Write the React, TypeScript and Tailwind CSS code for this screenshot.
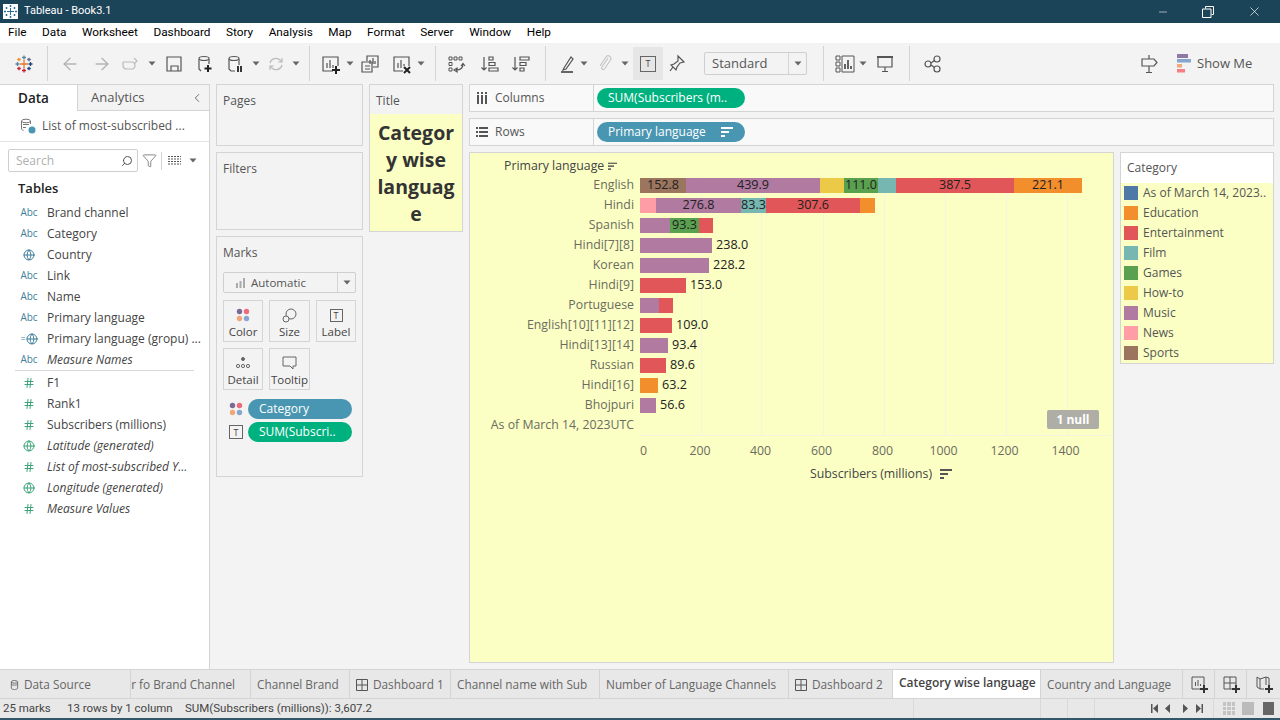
import { ArrowLeft, ArrowRight, Globe, Hash, Search, X, Minus, ChevronLeft, Filter } from "lucide-react";

const C = {
  asof: "#4e79a7",
  edu: "#f28e2b",
  ent: "#e15759",
  film: "#76b7b2",
  games: "#59a14f",
  how: "#edc948",
  music: "#b07aa1",
  news: "#ff9da7",
  sports: "#9c755f",
};

type Seg = { w: number; c: string; t?: string };

const rows: { name: string; segs: Seg[]; after?: string }[] = [
  {
    name: "English",
    segs: [
      { w: 46, c: C.sports, t: "152.8" },
      { w: 134, c: C.music, t: "439.9" },
      { w: 24, c: C.how },
      { w: 34, c: C.games, t: "111.0" },
      { w: 18, c: C.film },
      { w: 118, c: C.ent, t: "387.5" },
      { w: 68, c: C.edu, t: "221.1" },
    ],
  },
  {
    name: "Hindi",
    segs: [
      { w: 16, c: C.news },
      { w: 85, c: C.music, t: "276.8" },
      { w: 25, c: C.film, t: "83.3" },
      { w: 94, c: C.ent, t: "307.6" },
      { w: 15, c: C.edu },
    ],
  },
  {
    name: "Spanish",
    segs: [
      { w: 30, c: C.music },
      { w: 29, c: C.games, t: "93.3" },
      { w: 14, c: C.ent },
    ],
  },
  { name: "Hindi[7][8]", segs: [{ w: 72, c: C.music }], after: "238.0" },
  { name: "Korean", segs: [{ w: 69, c: C.music }], after: "228.2" },
  { name: "Hindi[9]", segs: [{ w: 46, c: C.ent }], after: "153.0" },
  { name: "Portuguese", segs: [{ w: 19, c: C.music }, { w: 14, c: C.ent }] },
  { name: "English[10][11][12]", segs: [{ w: 32, c: C.ent }], after: "109.0" },
  { name: "Hindi[13][14]", segs: [{ w: 28, c: C.music }], after: "93.4" },
  { name: "Russian", segs: [{ w: 26, c: C.ent }], after: "89.6" },
  { name: "Hindi[16]", segs: [{ w: 18, c: C.edu }], after: "63.2" },
  { name: "Bhojpuri", segs: [{ w: 16, c: C.music }], after: "56.6" },
  { name: "As of March 14, 2023UTC", segs: [] },
];

const legend = [
  ["As of March 14, 2023..", C.asof],
  ["Education", C.edu],
  ["Entertainment", C.ent],
  ["Film", C.film],
  ["Games", C.games],
  ["How-to", C.how],
  ["Music", C.music],
  ["News", C.news],
  ["Sports", C.sports],
];

const gridLines = [60.5, 121, 182.5, 243.5, 304.5, 366, 426.5];
const ticks = ["200", "400", "600", "800", "1000", "1200", "1400"];

function Caret({ className = "" }: { className?: string }) {
  return (
    <svg width="8" height="5" viewBox="0 0 8 5" className={className}>
      <path d="M0.5 0.5h7L4 4.5z" fill="#666" />
    </svg>
  );
}

function Sep({ className = "" }: { className?: string }) {
  return <div className={`h-[35px] w-px bg-[#d4d4d4] ${className}`} />;
}

function Ico({ children, className = "" }: { children: React.ReactNode; className?: string }) {
  return (
    <svg
      width="20"
      height="20"
      viewBox="0 0 20 20"
      fill="none"
      stroke="#555"
      strokeWidth="1.2"
      className={`shrink-0 ${className}`}
    >
      {children}
    </svg>
  );
}

function SortGlyph({ color = "#fff" }: { color?: string }) {
  return (
    <svg width="12" height="11" viewBox="0 0 12 11" fill={color}>
      <rect x="0" y="0" width="12" height="2" />
      <rect x="0" y="4" width="8" height="2" />
      <rect x="0" y="8" width="4" height="2" />
    </svg>
  );
}

function Dots({ size = 14 }: { size?: number }) {
  return (
    <svg width={size} height={size} viewBox="0 0 14 14">
      <circle cx="3.5" cy="3.5" r="2.7" fill="#7b6a94" />
      <circle cx="10.5" cy="3.5" r="2.7" fill="#ee6b7b" />
      <circle cx="3.5" cy="10.5" r="2.7" fill="#f0a878" />
      <circle cx="10.5" cy="10.5" r="2.7" fill="#86a6cf" />
    </svg>
  );
}

function TBox({ size = 13 }: { size?: number }) {
  return (
    <span
      className="flex items-center justify-center border border-[#666] text-[9px] leading-none text-[#444]"
      style={{ width: size, height: size }}
    >
      T
    </span>
  );
}

function TableauLogo() {
  const p = (x: number, y: number, r: number, c: string) => (
    <path d={`M${x - r} ${y}H${x + r}M${x} ${y - r}V${y + r}`} stroke={c} strokeWidth="1.3" />
  );
  return (
    <svg width="18" height="18" viewBox="0 0 18 18" fill="none">
      {p(9, 9, 4, "#e8762d")}
      {p(9, 2.5, 2, "#5b879b")}
      {p(9, 15.5, 2, "#c72035")}
      {p(2.5, 9, 2, "#59879b")}
      {p(15.5, 9, 2, "#1f447e")}
      {p(4, 4.5, 1.8, "#f28e2b")}
      {p(14, 4.5, 1.8, "#5b6591")}
      {p(4, 13.5, 1.8, "#c72035")}
      {p(14, 13.5, 1.8, "#1f447e")}
    </svg>
  );
}

function Toolbar() {
  return (
    <div className="flex h-[41px] shrink-0 items-center bg-[#f3f3f3] text-[#555]">
      <div className="flex w-[47px] justify-center">
        <TableauLogo />
      </div>
      <Sep />
      <ArrowLeft size={20} strokeWidth={1.6} className="ml-[12px] text-[#b5b5b5]" />
      <ArrowRight size={20} strokeWidth={1.6} className="ml-[12px] text-[#b5b5b5]" />
      <Ico className="ml-[9px]">
        <path d="M2 8h10a4 4 0 0 1 0 7H5a3.500 3.500 0 0 1-3-3.500V8" stroke="#bbb" />
        <path d="M13 4l3 3-3 3" stroke="#bbb" />
      </Ico>
      <Caret className="ml-[7px]" />
      <Ico className="ml-[8px]">
        <path d="M3 3h14v14H3z" />
        <path d="M7 17v-5h7v5" />
      </Ico>
      <Ico className="ml-[11px]">
        <ellipse cx="9" cy="4.500" rx="5" ry="2" />
        <path d="M4 5v10l2 2M14 5v5" />
        <path d="M13 11v7M9.500 14.500h7" stroke="#222" strokeWidth="2" />
      </Ico>
      <Ico className="ml-[11px]">
        <ellipse cx="8" cy="4.500" rx="5" ry="2" />
        <path d="M3 5v10l2 2h4M13 5v6" />
        <path d="M12 12v6M15 12v6" stroke="#222" strokeWidth="1.8" />
      </Ico>
      <Caret className="ml-[6px]" />
      <Ico className="ml-[6px]">
        <path d="M4 9a6 6 0 0 1 10-3l2 2M16 11a6 6 0 0 1-10 3l-2-2" stroke="#bbb" />
        <path d="M16 4v4h-4M4 16v-4h4" stroke="#bbb" />
      </Ico>
      <Caret className="ml-[6px]" />
      <Sep className="ml-[9px]" />
      <Ico className="ml-[11px]">
        <path d="M12 17H2V3h15v9" />
        <path d="M6 14V9M9 14V6M12 14v-3" />
        <path d="M15 12v8M11 16h8" stroke="#222" strokeWidth="2" />
      </Ico>
      <Caret className="ml-[5px]" />
      <Ico className="ml-[6px]">
        <path d="M7 7V2h11v11h-5" />
        <path d="M2 8h10v10H2z" />
        <path d="M10 10V6M13 10V4M15 10V7M5 15h5M5 12h5" />
      </Ico>
      <Ico className="ml-[12px]">
        <path d="M11 17H2V3h15v9" />
        <path d="M6 14V9M9 14V6M12 12v-2" />
        <path d="M12 13l6 6M18 13l-6 6" stroke="#222" strokeWidth="2" />
      </Ico>
      <Caret className="ml-[5px]" />
      <Sep className="ml-[10px]" />
      <Ico className="ml-[10px]">
        <path d="M3 3h3v3H3zM8 3h3v3H8zM13 3h3v3h-3zM3 8.500h3v3H3zM3 14h3v3H3z" strokeWidth="1" />
        <path d="M10 16c4 0 7-2 7-6M15 12l2-2.500 2 2.500M8 16l3-2v4z" />
      </Ico>
      <Ico className="ml-[13px]">
        <path d="M5 3v13M2.500 13.500L5 16l2.500-2.500" />
        <path d="M10 3h4v3h-4zM10 8.500h6v3h-6zM10 14h9v3h-9z" />
      </Ico>
      <Ico className="ml-[11px]">
        <path d="M5 3v13M2.500 13.500L5 16l2.500-2.500" />
        <path d="M10 3h9v3h-9zM10 8.500h6v3h-6zM10 14h4v3h-4z" />
      </Ico>
      <Sep className="ml-[15px]" />
      <Ico className="ml-[11px]">
        <path d="M7 14L14 3l2 2-7 10-3 1z" />
        <path d="M4 18h12" strokeWidth="1.800" />
      </Ico>
      <Caret className="ml-[3px]" />
      <Ico className="ml-[7px]">
        <path d="M13 4l-6 9a1.500 1.500 0 0 0 2.500 2l6-9a2.700 2.700 0 0 0-4.500-3l-6 9" stroke="#c4c4c4" />
      </Ico>
      <Caret className="ml-[6px]" />
      <div className="ml-[4px] flex h-[33px] w-[30px] items-center justify-center bg-[#e6e6e6]">
        <TBox size={16} />
      </div>
      <Ico className="ml-[4px]">
        <path d="M11 2l6 6-4 1-3 4-1 3-5-5 3-1 4-3zM6 13l-3 4" />
      </Ico>
      <div className="ml-[17px] flex h-[23px] w-[103px] items-center rounded-[2px] border border-[#cfcfcf] text-[13px]">
        <span className="flex-1 pl-[7px]">Standard</span>
        <span className="flex h-full w-[18px] items-center justify-center border-l border-[#d4d4d4]">
          <Caret />
        </span>
      </div>
      <Sep className="ml-[16px]" />
      <Ico className="ml-[11px]">
        <path d="M1 2h4v4H1zM1 8h4v4H1zM1 14h4v4H1zM7 2h12v16H7z" strokeWidth="1" />
        <path d="M10 15v-5M13 15V6M16 15v-3" strokeWidth="1.800" />
      </Ico>
      <Caret className="ml-[4px]" />
      <Ico className="ml-[8px]">
        <path d="M2 3h16" strokeWidth="2" />
        <path d="M3 4v9h14V4M10 13v4M7 17.500h6" />
      </Ico>
      <Sep className="ml-[14px]" />
      <Ico className="ml-[13px]">
        <circle cx="5" cy="10" r="3" />
        <circle cx="14" cy="5" r="3" />
        <circle cx="14" cy="15" r="3" />
        <path d="M8 9l3.500-2.500M8 11l3.500 2.500" />
      </Ico>
      <Ico className="ml-[196px]">
        <path d="M10 1v4M3 5h12l3 3.500-3 3.500H3zM10 12v6M7 18.500h6" />
      </Ico>
      <div className="ml-[18px] flex items-center gap-[6px] text-[13px]">
        <svg width="14" height="19" viewBox="0 0 14 19">
          <rect x="0" y="0" width="11" height="4" fill="#8d79a3" />
          <rect x="0" y="5" width="14" height="3.500" fill="#86a6cf" />
          <rect x="0" y="10" width="5" height="3.500" fill="#f0a878" />
          <rect x="0" y="15" width="8" height="3.500" fill="#f47f85" />
        </svg>
        Show Me
      </div>
    </div>
  );
}

function Field({ name, kind, italic }: { name: string; kind: "abc" | "geo" | "hash" | "geom" | "lang"; italic?: boolean }) {
  return (
    <div className="flex h-[21px] shrink-0 items-center">
      <span className="flex w-[47px] shrink-0 items-center justify-center pr-[5px] pl-[16px] whitespace-nowrap">
        {kind === "abc" && <span className="text-[10px] font-medium text-[#3f7f9a]">Abc</span>}
        {kind === "geo" && <Globe size={12} className="text-[#3f7f9a]" />}
        {kind === "lang" && (
          <span className="flex items-center text-[9px] leading-none text-[#3f7f9a]">
            =<Globe size={12} />
          </span>
        )}
        {kind === "geom" && <Globe size={12} className="text-[#3ca37a]" />}
        {kind === "hash" && <Hash size={12} className="text-[#3ca37a]" />}
      </span>
      <span className={`truncate text-[#444] ${italic ? "italic" : ""}`}>{name}</span>
    </div>
  );
}

function DataPane() {
  return (
    <div className="flex w-[210px] shrink-0 flex-col border-t border-r border-[#d4d4d4] bg-white">
      <div className="flex h-[26px] shrink-0 text-[13px]">
        <div className="flex w-[77px] items-center pl-[18px] text-[13.500px] font-semibold text-[#222]">Data</div>
        <div className="flex flex-1 items-center justify-between border-b border-l border-[#d4d4d4] bg-[#f3f3f3] pr-[5px] pl-[13px] text-[#555]">
          Analytics
          <ChevronLeft size={14} strokeWidth={1.4} />
        </div>
      </div>
      <div className="flex h-[31px] shrink-0 items-center border-b border-[#e4e4e4] pl-[20px] text-[#555]">
        <svg width="16" height="16" viewBox="0 0 16 16" fill="none" stroke="#777" className="mr-[6px]">
          <ellipse cx="6" cy="3" rx="4.500" ry="1.800" />
          <path d="M1.500 3v8l2 2M10.500 3v3M3 6.500h6M3 9.500h3" />
          <circle cx="12" cy="12" r="3.500" fill="#4996b2" stroke="none" />
        </svg>
        List of most-subscribed ...
      </div>
      <div className="flex h-[30px] shrink-0 items-end pl-[8px]">
        <div className="flex h-[23px] w-[130px] items-center justify-between rounded-[2px] border border-[#cfcfcf] pr-[4px] pl-[7px] text-[#b0b0b0]">
          Search
          <Search size={12} className="-scale-x-100 text-[#555]" />
        </div>
        <Filter size={15} strokeWidth={1.1} className="mb-[4px] ml-[4px] text-[#555]" />
        <div className="mb-[2px] ml-[4px] h-[18px] w-px bg-[#d4d4d4]" />
        <svg width="13" height="11" viewBox="0 0 13 11" className="mb-[6px] ml-[6px]" stroke="#555" strokeDasharray="2 1">
          <path d="M0 1.500h13M0 4h13M0 6.500h13M0 9h13" />
        </svg>
        <Caret className="mb-[9px] ml-[8px]" />
      </div>
      <div className="flex h-[30px] shrink-0 items-center pt-[3px] pl-[18px] text-[13px] font-semibold text-[#222]">Tables</div>
      <Field name="Brand channel" kind="abc" />
      <Field name="Category" kind="abc" />
      <Field name="Country" kind="geo" />
      <Field name="Link" kind="abc" />
      <Field name="Name" kind="abc" />
      <Field name="Primary language" kind="abc" />
      <Field name="Primary language (gropu) ..." kind="lang" />
      <Field name="Measure Names" kind="abc" italic />
      <div className="mx-[15px] mb-px h-px shrink-0 bg-[#d9d9d9]" />
      <Field name="F1" kind="hash" />
      <Field name="Rank1" kind="hash" />
      <Field name="Subscribers (millions)" kind="hash" />
      <Field name="Latitude (generated)" kind="geom" italic />
      <Field name="List of most-subscribed Y..." kind="hash" italic />
      <Field name="Longitude (generated)" kind="geom" italic />
      <Field name="Measure Values" kind="hash" italic />
    </div>
  );
}

function MarkBtn({ label, icon, className = "" }: { label: string; icon: React.ReactNode; className?: string }) {
  return (
    <div className={`flex h-[42px] w-[40px] flex-col items-center border border-[#d4d4d4] pt-[4px] text-[11.500px] text-[#444] ${className}`}>
      <div className="flex h-[20px] items-center">{icon}</div>
      <span className="leading-[14px] whitespace-nowrap">{label}</span>
    </div>
  );
}

function MarksColumn() {
  return (
    <div className="ml-[6px] flex w-[147px] shrink-0 flex-col gap-[6px] text-[#555]">
      <div className="h-[62px] border border-[#d4d4d4] pt-[7px] pl-[6px]">Pages</div>
      <div className="h-[78px] border border-[#d4d4d4] pt-[7px] pl-[6px]">Filters</div>
      <div className="h-[241px] border border-[#d4d4d4] pt-[7px] pl-[6px]">
        <div>Marks</div>
        <div className="mt-[10px] flex h-[21px] w-[133px] items-center rounded-[2px] border border-[#cfcfcf] text-[11.500px]">
          <span className="flex flex-1 items-center gap-[5px] pl-[12px]">
            <svg width="10" height="10" viewBox="0 0 10 10" fill="#aaa">
              <rect x="0" y="5" width="2" height="5" />
              <rect x="3.500" y="3" width="2" height="7" />
              <rect x="7" y="0" width="2" height="10" />
            </svg>
            Automatic
          </span>
          <span className="flex h-full w-[18px] items-center justify-center border-l border-[#d4d4d4]">
            <Caret />
          </span>
        </div>
        <div className="mt-[7px] flex gap-[6px]">
          <MarkBtn label="Color" icon={<Dots />} />
          <MarkBtn
            label="Size"
            className="w-[41px]"
            icon={
              <svg width="15" height="15" viewBox="0 0 15 15" fill="none" stroke="#666">
                <circle cx="9" cy="6" r="5" />
                <circle cx="4" cy="11" r="3" fill="#f3f3f3" />
              </svg>
            }
          />
          <MarkBtn label="Label" icon={<TBox />} />
        </div>
        <div className="mt-[6px] flex gap-[6px]">
          <MarkBtn
            label="Detail"
            icon={
              <svg width="14" height="12" viewBox="0 0 14 12" fill="none" stroke="#666">
                <circle cx="7" cy="2" r="1.500" fill="#666" />
                <circle cx="2" cy="9" r="1.600" />
                <circle cx="7" cy="9" r="1.600" />
                <circle cx="12" cy="9" r="1.600" />
              </svg>
            }
          />
          <MarkBtn
            label="Tooltip"
            className="w-[41px]"
            icon={
              <svg width="15" height="14" viewBox="0 0 15 14" fill="none" stroke="#666">
                <path d="M1 1h13v9h-3v3l-3-3H1z" />
              </svg>
            }
          />
        </div>
        <div className="mt-[9px] flex items-center gap-[5px] pl-[6px]">
          <Dots />
          <div className="flex h-[20px] w-[104px] items-center rounded-full bg-[#4996b2] pl-[11px] text-white">Category</div>
        </div>
        <div className="mt-[3px] flex items-center gap-[5px] pl-[6px]">
          <TBox size={14} />
          <div className="flex h-[20px] w-[104px] items-center rounded-full bg-[#00b180] pl-[11px] text-white">SUM(Subscri..</div>
        </div>
      </div>
    </div>
  );
}

function TitleColumn() {
  return (
    <div className="ml-[6px] h-[148px] w-[94px] shrink-0 border border-[#d4d4d4] text-[#555]">
      <div className="flex h-[29px] items-center pt-[2px] pl-[6px]">Title</div>
      <div className="h-[117px] bg-[#fbffc4] pt-[5px] text-center text-[19.500px] leading-[27px] font-bold text-[#333]">
        Categor
        <br />
        y wise
        <br />
        languag
        <br />e
      </div>
    </div>
  );
}

function Shelf({ label, icon, children, className = "" }: { label: string; icon: React.ReactNode; children: React.ReactNode; className?: string }) {
  return (
    <div className={`flex h-[28px] items-center border border-[#d4d4d4] bg-[#f9f9f9] ${className}`}>
      <div className="flex h-full w-[124px] items-center gap-[7px] border-r border-[#d4d4d4] pl-[6px] text-[#555]">
        {icon}
        {label}
      </div>
      {children}
    </div>
  );
}

function Chart() {
  return (
    <div className="relative flex h-[511px] w-[645px] shrink-0 flex-col border border-[#d4d4d4] bg-[#fbffc4] text-[12.300px] text-[#6b6b5f]">
      <div className="flex h-[22px] items-center gap-[4px] pt-[5px] pl-[34px] font-medium text-[#444]">
        Primary language
        <span className="flex origin-left scale-75">
          <SortGlyph color="#555" />
        </span>
      </div>
      {/* plot */}
      <div className="relative">
        <div className="absolute top-0 bottom-0 left-[170px] w-[440px]">
          {gridLines.map((x) => (
            <div key={x} className="absolute top-0 bottom-0 w-px bg-[#f3f5dc]" style={{ left: x }} />
          ))}
        </div>
        {rows.map((r) => (
          <div key={r.name} className="relative flex h-[20px] items-center">
            <div className="w-[164px] shrink-0 text-right whitespace-nowrap">{r.name}</div>
            <div className="ml-[6px] flex h-[15px] items-center text-[12.600px] text-[#222]">
              {r.segs.map((s, i) => (
                <div
                  key={i}
                  className="flex h-full items-center justify-center"
                  style={{ width: s.w, backgroundColor: s.c }}
                >
                  {s.t}
                </div>
              ))}
              {r.after && <span className="ml-[4px]">{r.after}</span>}
            </div>
          </div>
        ))}
        <div className="absolute top-[235px] right-[14px] flex h-[19px] w-[52px] items-center justify-center rounded-[2px] bg-[#aeaea6] text-[12px] font-bold text-white">
          1 null
        </div>
      </div>
      <div className="ml-[170px] flex h-[25px] w-[472px] items-end border-t border-[#f3f5dc]">
        <span className="ml-[-1px] w-[9px] shrink-0 pl-[1px]">0</span>
        {ticks.map((t, i) => (
          <span key={t} className={`shrink-0 text-center ${i === 0 ? "ml-[22px] w-[60px]" : "w-[61px]"}`}>
            {t}
          </span>
        ))}
      </div>
      <div className="mt-[5px] flex items-center pl-[340px] font-medium text-[#444]">
        Subscribers (millions)
        <span className="ml-[8px] flex">
          <SortGlyph color="#555" />
        </span>
      </div>
    </div>
  );
}

function Legend() {
  return (
    <div className="ml-[6px] h-[212px] w-[154px] shrink-0 border border-[#d4d4d4] text-[#555]">
      <div className="flex h-[30px] items-center bg-white pb-[1px] pl-[6px] text-[#555]">Category</div>
      <div className="h-[180px] bg-[#fbffc4]">
        {legend.map(([label, color]) => (
          <div key={label} className="flex h-[20px] items-center pl-[3px]">
            <span className="h-[14px] w-[14px] shrink-0" style={{ backgroundColor: color }} />
            <span className="ml-[5px] whitespace-nowrap">{label}</span>
          </div>
        ))}
      </div>
    </div>
  );
}

function Workspace() {
  return (
    <div className="mx-[6px] flex min-w-0 flex-1 flex-col">
      <Shelf
        label="Columns"
        icon={
          <svg width="12" height="12" viewBox="0 0 12 12" fill="#555">
            <rect x="1" y="3" width="2" height="9" />
            <rect x="5" y="3" width="2" height="9" />
            <rect x="9" y="3" width="2" height="9" />
            <rect x="1" y="0" width="2" height="2" />
            <rect x="5" y="0" width="2" height="2" />
            <rect x="9" y="0" width="2" height="2" />
          </svg>
        }
      >
        <div className="ml-[3px] flex h-[20px] w-[148px] items-center rounded-full bg-[#00b180] pl-[11px] text-white">SUM(Subscribers (m..</div>
      </Shelf>
      <Shelf
        label="Rows"
        className="mt-[6px]"
        icon={
          <svg width="12" height="12" viewBox="0 0 12 12" fill="#555">
            <rect x="3" y="1" width="9" height="2" />
            <rect x="3" y="5" width="9" height="2" />
            <rect x="3" y="9" width="9" height="2" />
            <rect x="0" y="1" width="2" height="2" />
            <rect x="0" y="5" width="2" height="2" />
            <rect x="0" y="9" width="2" height="2" />
          </svg>
        }
      >
        <div className="ml-[3px] flex h-[20px] w-[148px] items-center justify-between rounded-full bg-[#4996b2] pr-[12px] pl-[11px] text-white">
          Primary language
          <SortGlyph />
        </div>
      </Shelf>
      <div className="mt-[6px] flex">
        <Chart />
        <Legend />
      </div>
    </div>
  );
}

function Tab({ w, children, active, cut }: { w: number; children: React.ReactNode; active?: boolean; cut?: boolean }) {
  return (
    <div
      className={`flex h-full shrink-0 items-center border-r border-[#d4d4d4] whitespace-nowrap ${cut ? "justify-end pr-[15px]" : "pl-[6px]"} ${active ? "bg-white pb-[2px] text-[12px] font-semibold text-[#444]" : "pt-[2px] text-[#666]"}`}
      style={{ width: w }}
    >
      {children}
    </div>
  );
}

function DashGlyph() {
  return (
    <svg width="12" height="12" viewBox="0 0 12 12" fill="none" stroke="#555" className="mr-[5px] shrink-0">
      <path d="M.5.5h11v11H.5zM6 .5v11M.5 6h11" />
    </svg>
  );
}

function TabBar() {
  return (
    <div className="flex h-[30px] shrink-0 border-y border-[#d4d4d4] bg-[#e8e8e8] text-[11.800px]">
      <Tab w={131}>
        <svg width="9" height="12" viewBox="0 0 10 12" fill="none" stroke="#666" className="mr-[5px] ml-[4px]">
          <ellipse cx="5" cy="2.500" rx="3.500" ry="1.500" />
          <path d="M1.500 2.500v7c0 2 7 2 7 0v-7M1.500 5c0 1.500 7 1.500 7 0" />
        </svg>
        <span>Data Source</span>
      </Tab>
      <Tab w={120} cut>
        r fo Brand Channel
      </Tab>
      <Tab w={99}>Channel Brand</Tab>
      <Tab w={101}>
        <DashGlyph />
        Dashboard 1
      </Tab>
      <Tab w={149}>Channel name with Sub</Tab>
      <Tab w={189}>Number of Language Channels</Tab>
      <Tab w={104}>
        <DashGlyph />
        Dashboard 2
      </Tab>
      <Tab w={148} active>
        Category wise language
      </Tab>
      <Tab w={142}>Country and Language</Tab>
      <div className="flex w-[32px] shrink-0 items-center justify-center border-r border-[#d4d4d4]">
        <svg width="20" height="20" viewBox="0 0 20 20" fill="none" stroke="#555">
          <path d="M11 15H3V3h12v8M6.500 12V8M9 12V6M11.500 12v-2" />
          <path d="M15 11v8M11 15h8" stroke="#333" strokeWidth="2" />
        </svg>
      </div>
      <div className="flex w-[32px] shrink-0 items-center justify-center border-r border-[#d4d4d4]">
        <svg width="20" height="20" viewBox="0 0 20 20" fill="none" stroke="#555">
          <path d="M11 15H3V3h12v8M9 3v12M3 9h12" />
          <path d="M15 11v8M11 15h8" stroke="#333" strokeWidth="2" />
        </svg>
      </div>
      <div className="flex flex-1 items-center justify-center">
        <svg width="20" height="20" viewBox="0 0 20 20" fill="none" stroke="#555">
          <path d="M10 15H6L3 13V3l3 2 6-2 3 1v7M6 5v10M12 3v8" />
          <path d="M15 11v8M11 15h8" stroke="#333" strokeWidth="2" />
        </svg>
      </div>
    </div>
  );
}

function StatusBar() {
  return (
    <div className="flex h-[19px] shrink-0 items-center bg-[#e8e8e8] font-['Roboto',sans-serif] text-[11.500px] text-[#444]">
      <div className="flex w-[913px] shrink-0 whitespace-nowrap">
        <span className="ml-[3px] w-[64px]">25 marks</span>
        <span className="w-[118px]">13 rows by 1 column</span>
        <span>SUM(Subscribers (millions)): 3,607.2</span>
      </div>
      <div className="h-full w-px bg-[#d9d9d9]" />
      <div className="ml-[126px] h-full w-px bg-[#d9d9d9]" />
      <div className="ml-[26px] h-full w-px bg-[#d9d9d9]" />
      <div className="ml-[26px] h-full w-px bg-[#d9d9d9]" />
      <svg width="55" height="11" viewBox="0 0 55 11" fill="#555" className="ml-[55px]">
        <path d="M1 1h1.500v9H1zM8 1v9L3 5.500zM20 1v9l-5-4.500zM33 1l5 4.500L33 10zM46 1l5 4.500L46 10zM51.500 1H53v9h-1.500z" />
      </svg>
      <div className="ml-[8px] h-full w-px bg-[#d9d9d9]" />
      <div className="ml-[9px] grid h-[13px] w-[12px] grid-cols-3 gap-px">
        {Array.from({ length: 9 }).map((_, i) => (
          <span key={i} className="bg-[#c4c4c4]" />
        ))}
      </div>
      <div className="ml-[7px] h-[13px] w-[12px] bg-[#bbb]" />
      <div className="ml-[9px] h-[13px] w-[11px] bg-[#666]" />
    </div>
  );
}

export default function App() {
  return (
    <div className="flex h-[720px] w-[1280px] flex-col overflow-hidden bg-[#f3f3f3] font-['Open_Sans',sans-serif] text-[12px]">
      <div className="flex h-[23px] shrink-0 items-center bg-[#1c4459] font-['Roboto',sans-serif] text-white">
        <div className="ml-[3px] flex h-[15px] w-[15px] items-center justify-center bg-white">
          <svg width="13" height="13" viewBox="0 0 13 13" stroke="#2a6f97" strokeWidth="1" fill="none">
            <path d="M6.500 3v7M3 6.500h7M6.500 0v2M5.500 1h2M6.500 11v2M5.500 12h2M0 6.500h2M1 5.500v2M11 6.500h2M12 5.500v2M2.500 2v2M1.500 3h2M10.500 2v2M9.500 3h2M2.500 9v2M1.500 10h2M10.500 9v2M9.500 10h2" />
          </svg>
        </div>
        <span className="ml-[6px] flex-1 text-[11px]">Tableau - Book3.1</span>
        <Minus size={12} strokeWidth={1.2} className="mr-[33px]" />
        <svg width="12" height="12" viewBox="0 0 12 12" fill="none" stroke="#fff" className="mr-[33px]">
          <path d="M3.500 2.500v-2h8v8h-2M.5 3h8.500v8.500H.5z" />
        </svg>
        <X size={15} strokeWidth={1.1} className="mr-[18px]" />
      </div>
      <div className="flex h-[20px] shrink-0 items-center gap-[15.500px] bg-white pl-[8px] font-['Roboto',sans-serif] text-[11.800px] text-black">
        {["File", "Data", "Worksheet", "Dashboard", "Story", "Analysis", "Map", "Format", "Server", "Window", "Help"].map((m) => (
          <span key={m}>{m}</span>
        ))}
      </div>
      <Toolbar />
      <div className="flex min-h-0 flex-1">
        <DataPane />
        <MarksColumn />
        <TitleColumn />
        <Workspace />
      </div>
      <TabBar />
      <StatusBar />
      <div className="h-[2px] shrink-0 bg-[#33566b]" />
    </div>
  );
}
